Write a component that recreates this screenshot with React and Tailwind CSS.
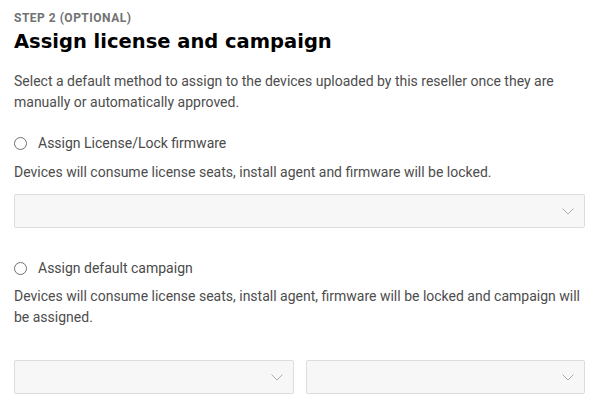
import React from "react";

function Chevron() {
  return (
    <svg width="12" height="7" viewBox="0 0 12 7" fill="none" className="shrink-0">
      <path d="M0.5 0.5l5.5 5.5 5.5-5.5" stroke="#adadad" strokeWidth="1" />
    </svg>
  );
}

function SelectBox({ className = "" }) {
  return (
    <div
      className={
        "h-[34px] bg-[#f7f7f7] border border-[#dcdcdc] rounded-[2px] flex items-center justify-end pr-[10px] " +
        className
      }
    >
      <Chevron />
    </div>
  );
}

function Radio({ label }) {
  return (
    <div className="flex items-center h-[20px]">
      <span className="w-[13px] h-[13px] rounded-full border border-[#6f6f6f] bg-white" />
      <span className="ml-[11px] text-[14px] text-[#4a4a4a]">{label}</span>
    </div>
  );
}

export default function App() {
  return (
    <div
      className="w-[610px] h-[410px] bg-white pl-[14px] pr-[25px] pt-[10px] overflow-hidden"
      style={{ fontFamily: '"Roboto", sans-serif' }}
    >
      <div className="text-[12px] leading-[16px] font-bold tracking-[0.5px] text-[#727272]">
        STEP 2 (OPTIONAL)
      </div>
      <div
        className="mt-[4px] text-[19.5px] leading-[24px] font-bold text-black"
        style={{ fontFamily: '"DejaVu Sans", sans-serif' }}
      >
        Assign license and campaign
      </div>
      <p className="mt-[17px] text-[14px] leading-[21px] text-[#4d4d4d]">
        Select a default method to assign to the devices uploaded by this reseller once they are
        <br />
        manually or automatically approved.
      </p>
      <div className="mt-[20px]">
        <Radio label="Assign License/Lock firmware" />
      </div>
      <p className="mt-[9px] text-[14px] leading-[21px] text-[#4d4d4d]">
        Devices will consume license seats, install agent and firmware will be locked.
      </p>
      <SelectBox className="mt-[11px]" />
      <div className="mt-[30px]">
        <Radio label="Assign default campaign" />
      </div>
      <p className="mt-[8px] text-[14px] leading-[21px] text-[#4d4d4d]">
        Devices will consume license seats, install agent, firmware will be locked and campaign will
        <br />
        be assigned.
      </p>
      <div className="mt-[32px] flex gap-[12px]">
        <SelectBox className="flex-1" />
        <SelectBox className="flex-1" />
      </div>
    </div>
  );
}
